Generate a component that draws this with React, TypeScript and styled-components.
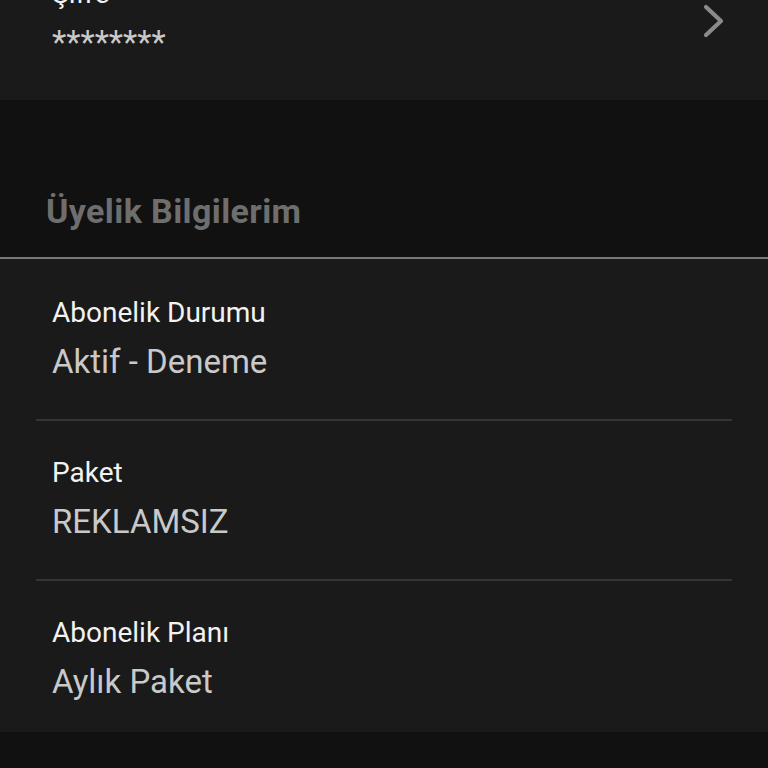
import React from "react";
import styled, { createGlobalStyle } from "styled-components";

const Global = createGlobalStyle`
  html, body {
    margin: 0;
    padding: 0;
    background: #111111;
    font-family: Roboto, "Noto Sans", "Liberation Sans", sans-serif;
    overflow: hidden;
  }
`;

const Page = styled.div`
  width: 768px;
  height: 768px;
  overflow: hidden;
  background: #111111;
`;

const Scroller = styled.div`
  display: flex;
  flex-direction: column;
  margin-top: -58px;
`;

const Card = styled.section<{ $padTop?: number }>`
  background: #1a1a1a;
  display: flex;
  flex-direction: column;
  padding-top: ${(p) => p.$padTop ?? 0}px;
`;

const Item = styled.div`
  margin: 0 36px;
  padding: 34px 16px 35px;
  display: flex;
  align-items: center;
  border-bottom: 2px solid #353535;
  &:last-child {
    border-bottom: none;
    padding-bottom: 28px;
  }
`;

const TopItem = styled(Item)`
  padding-bottom: 35px;
  &:last-child {
    padding-bottom: 35px;
  }
`;

const ItemText = styled.div`
  flex: 1;
  display: flex;
  flex-direction: column;
`;

const Label = styled.div`
  font-size: 28px;
  line-height: 36px;
  color: #f2f2f2;
`;

const Value = styled.div`
  margin-top: 9px;
  font-size: 33px;
  line-height: 44px;
  color: #c9c9c9;
`;

const Chevron = styled.svg`
  width: 24px;
  height: 34px;
  margin-right: -10px;
  flex-shrink: 0;
`;

const SectionHeader = styled.h2`
  margin: 0;
  padding: 91px 0 26px 46px;
  font-size: 34px;
  line-height: 40px;
  letter-spacing: 0.4px;
  font-weight: 700;
  color: #6e6e6e;
  border-bottom: 2px solid #7a7a7a;
`;

const items = [
  { label: "Abonelik Durumu", value: "Aktif - Deneme" },
  { label: "Paket", value: "REKLAMSIZ" },
  { label: "Abonelik Planı", value: "Aylık Paket" },
];

export default function App() {
  return (
    <Page>
      <Global />
      <Scroller>
        <Card>
          <TopItem>
            <ItemText>
              <Label>Şifre</Label>
              <Value>********</Value>
            </ItemText>
            <Chevron viewBox="0 0 24 34">
              <polyline
                points="4,3 19,17 4,31"
                fill="none"
                stroke="#8a8a8a"
                strokeWidth="4.2"
                strokeLinecap="round"
                strokeLinejoin="round"
              />
            </Chevron>
          </TopItem>
        </Card>
        <SectionHeader>Üyelik Bilgilerim</SectionHeader>
        <Card $padTop={2}>
          {items.map((it) => (
            <Item key={it.label}>
              <ItemText>
                <Label>{it.label}</Label>
                <Value>{it.value}</Value>
              </ItemText>
            </Item>
          ))}
        </Card>
      </Scroller>
    </Page>
  );
}
